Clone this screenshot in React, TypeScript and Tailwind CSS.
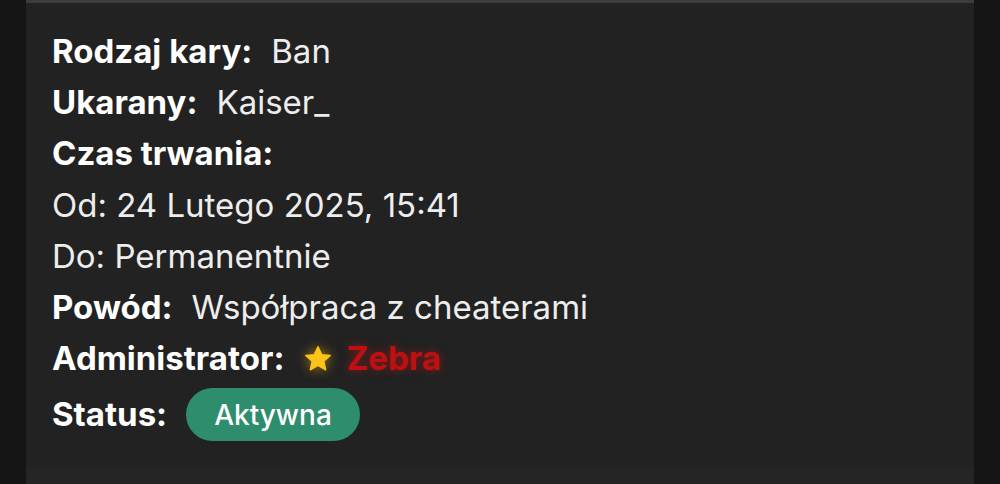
import React from "react";

function Row({
  label,
  children,
  className = "",
}: {
  label?: string;
  children?: React.ReactNode;
  className?: string;
}) {
  return (
    <div className={`flex items-center h-[51px] whitespace-nowrap ${className}`}>
      {label && <span className="font-bold text-white mr-[19px]">{label}</span>}
      {children}
    </div>
  );
}

export default function App() {
  return (
    <div
      className="w-[1000px] h-[484px] bg-[#151515] px-[26px] overflow-hidden"
      style={{ fontFamily: "Inter, 'Noto Sans', sans-serif" }}
    >
      <div className="h-full bg-[#222222] border-t-[3px] border-[#3d3d3d] flex flex-col">
        <div className="flex-1 pl-[26px] pt-[23px] text-[33px] text-[#ededed]">
          <Row label="Rodzaj kary:">
            <span>Ban</span>
          </Row>
          <Row label="Ukarany:">
            <span>Kaiser_</span>
          </Row>
          <Row label="Czas trwania:" />
          <Row className="mt-[1px]">
            <span>Od: 24 Lutego 2025, 15:41</span>
          </Row>
          <Row>
            <span>Do: Permanentnie</span>
          </Row>
          <Row label="Powód:">
            <span>Współpraca z cheaterami</span>
          </Row>
          <Row label="Administrator:">
            <span className="flex items-center gap-[13px]">
              <svg
                width="30"
                height="30"
                viewBox="0 0 24 24"
                className="drop-shadow-[0_0_6px_rgba(255,190,0,0.6)]"
              >
                <path
                  d="M12 2.2l2.9 6.3 6.9.7-5.2 4.6 1.5 6.8L12 17.1l-6.1 3.5 1.5-6.8-5.2-4.6 6.9-.7z"
                  fill="#fcc419"
                  stroke="#fcc419"
                  strokeWidth="1.2"
                  strokeLinejoin="round"
                />
              </svg>
              <span
                className="font-bold text-[#bd1111]"
                style={{ textShadow: "0 0 8px rgba(220,20,20,0.55)" }}
              >
                Zebra
              </span>
            </span>
          </Row>
          <Row label="Status:" className="mt-[5px]">
            <span className="inline-flex items-center h-[53px] px-[28px] rounded-full bg-[#2e8d6c] text-white text-[28px] font-medium">
              Aktywna
            </span>
          </Row>
        </div>
        <div className="h-[17px] bg-[#252525]" />
      </div>
    </div>
  );
}
